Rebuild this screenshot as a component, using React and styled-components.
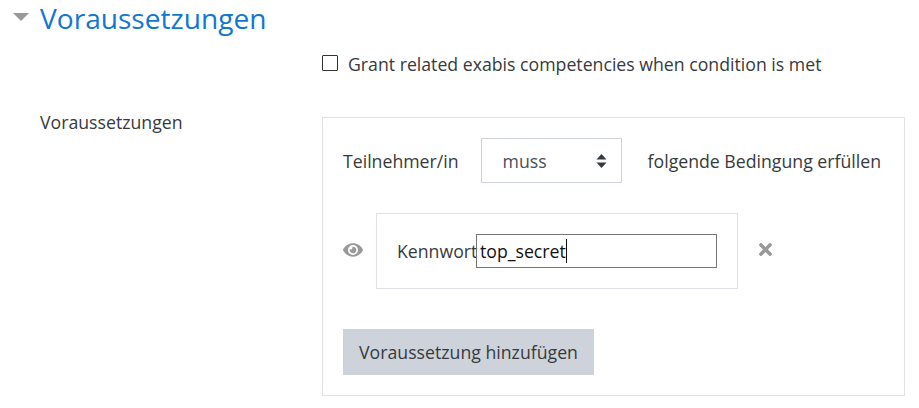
import React from 'react'
import styled, { createGlobalStyle } from 'styled-components'
import { FaEye, FaTimes } from 'react-icons/fa'

const Global = createGlobalStyle`
  html, body { margin: 0; padding: 0; background: #fff; }
  body {
    font-family: "Open Sans", "Noto Sans", sans-serif;
    font-size: 17.7px;
    color: #373a3c;
  }
`

const Page = styled.div`
  width: 919px;
  height: 408px;
  overflow: hidden;
  box-sizing: border-box;
`

const Header = styled.div`
  display: flex;
  align-items: center;
  height: 38px;
  padding-left: 13px;
  gap: 11px;
`

const Caret = styled.span`
  width: 0;
  height: 0;
  border-left: 8px solid transparent;
  border-right: 8px solid transparent;
  border-top: 8px solid #999;
  margin-bottom: 4px;
`

const Title = styled.h3`
  margin: 0;
  font-size: 28.1px;
  font-weight: 400;
  line-height: 38px;
  color: #1177d1;
  position: relative;
  top: -1px;
`

const Row = styled.div`
  display: grid;
  grid-template-columns: 282px 583px;
  padding-left: 40px;
`

const Check = styled.label`
  grid-column: 2;
  display: flex;
  align-items: center;
  gap: 10px;
  height: 26px;
  margin-top: 13px;
  margin-bottom: 40px;
`

const Box = styled.span`
  box-sizing: border-box;
  width: 16px;
  height: 16px;
  border: 1px solid #333;
  border-radius: 1px;
  margin-top: -2px;
`

const Label = styled.div`
  line-height: 24px;
  margin-top: -7px;
`

const Panel = styled.div`
  width: 583px;
  height: 279px;
  box-sizing: border-box;
  border: 1px solid #dee2e6;
  padding: 20px;
`

const TopLine = styled.div`
  display: flex;
  align-items: center;
  height: 45px;
  white-space: nowrap;
`

const Select = styled.div`
  flex: none;
  width: 141px;
  height: 45px;
  box-sizing: border-box;
  margin-left: 22px;
  margin-right: 26px;
  border: 1px solid #ced4da;
  display: flex;
  align-items: center;
  justify-content: space-between;
  padding: 0 14px 0 21px;
  color: #495057;
`

const Arrows = styled.svg`
  width: 11px;
  height: 14px;
  display: block;
`

const Condition = styled.div`
  display: flex;
  align-items: center;
  margin-top: 30px;
  height: 76px;
`

const EyeSlot = styled.div`
  width: 33px;
  display: flex;
  color: #999;
  font-size: 20px;
  margin-top: -3px;
`

const Inner = styled.div`
  width: 362px;
  height: 76px;
  box-sizing: border-box;
  border: 1px solid #dee2e6;
  display: flex;
  align-items: center;
  padding-left: 20px;
  white-space: nowrap;
`

const Word = styled.span`
  width: 79px;
  flex: none;
`

const TextField = styled.div`
  flex: none;
  width: 241px;
  height: 34px;
  box-sizing: border-box;
  border: 1px solid #767676;
  display: flex;
  align-items: center;
  padding-left: 3px;
  color: #111;
`

const CursorBar = styled.span`
  width: 1px;
  height: 24px;
  background: #111;
`

const Remove = styled.div`
  margin-left: 18px;
  margin-top: -3px;
  color: #999;
  font-size: 19px;
  display: flex;
`

const AddButton = styled.button`
  display: block;
  margin-top: 40px;
  width: 251px;
  height: 46px;
  border: none;
  background: #ced3db;
  color: #373a3c;
  font: inherit;
  padding: 0;
  white-space: nowrap;
`

export default function App() {
  return (
    <Page>
      <Global />
      <Header>
        <Caret />
        <Title>Voraussetzungen</Title>
      </Header>
      <Row>
        <Check>
          <Box />
          Grant related exabis competencies when condition is met
        </Check>
      </Row>
      <Row>
        <Label>Voraussetzungen</Label>
        <Panel>
          <TopLine>
            Teilnehmer/in
            <Select>
              muss
              <Arrows viewBox="0 0 11 14">
                <path d="M5.5 0 L10.5 5.5 H0.5 Z M5.5 14 L0.5 8.5 H10.5 Z" fill="#343a40" />
              </Arrows>
            </Select>
            folgende Bedingung erfüllen
          </TopLine>
          <Condition>
            <EyeSlot><FaEye /></EyeSlot>
            <Inner>
              <Word>Kennwort</Word>
              <TextField>top_secret<CursorBar /></TextField>
            </Inner>
            <Remove><FaTimes /></Remove>
          </Condition>
          <AddButton>Voraussetzung hinzufügen</AddButton>
        </Panel>
      </Row>
    </Page>
  )
}
